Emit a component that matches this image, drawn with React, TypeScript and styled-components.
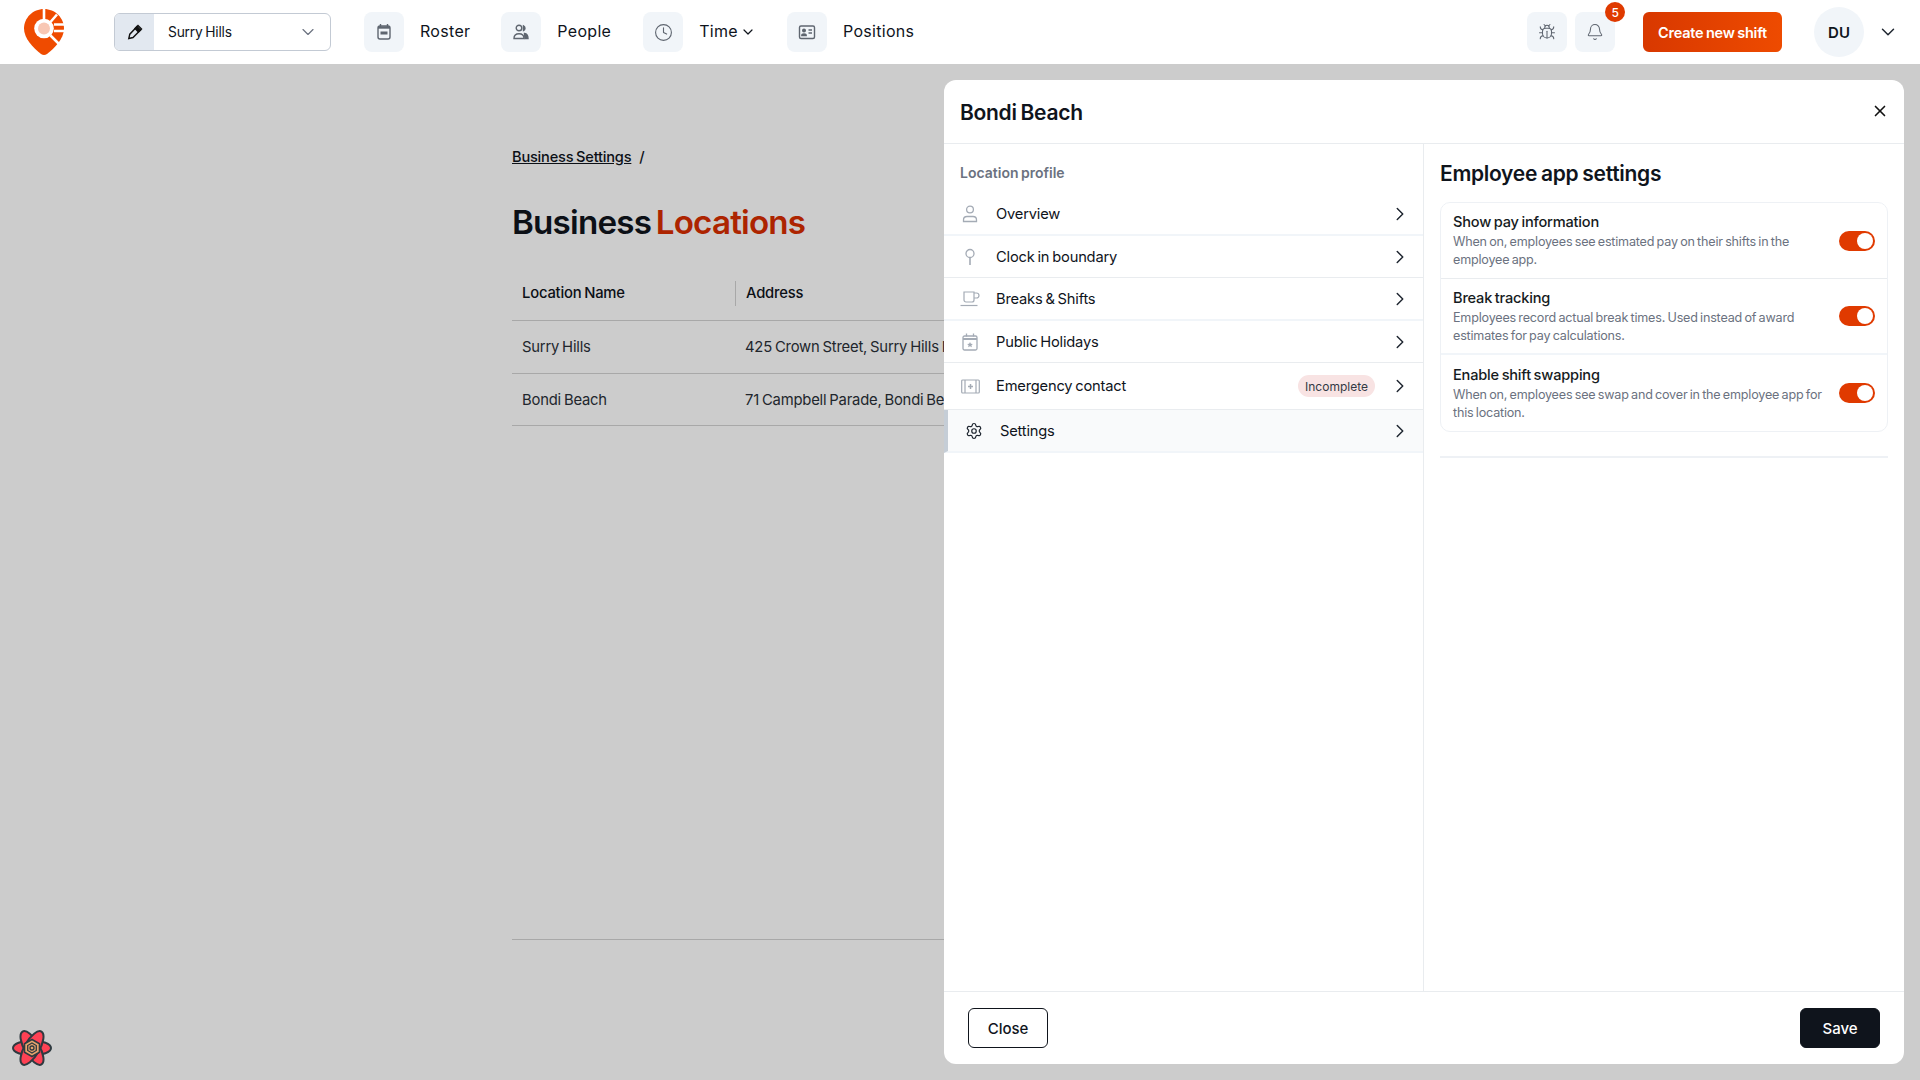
import React from "react";
import styled, { createGlobalStyle } from "styled-components";
import { ChevronDown, ChevronRight, Clock, Bug, Bell, X, Settings as Gear } from "lucide-react";

const Global = createGlobalStyle`
  html, body { margin: 0; padding: 0; height: 100%; background: #fff; overflow: hidden; }
  body { font-family: "Inter", "Liberation Sans", sans-serif; color: #0f141c; letter-spacing: -0.2px; word-spacing: -1px; }
  #root { height: 100%; }
  * { box-sizing: border-box; }
`;

const Shell = styled.div`
  height: 1080px;
  display: flex;
  flex-direction: column;
  position: relative;
`;
const Header = styled.header`
  height: 64px;
  flex: none;
  display: flex;
  align-items: center;
  padding: 0 21px 0 24px;
  background: #fff;
`;
const Logo = styled.svg`
  width: 40px;
  height: 46px;
  flex: none;
  margin-right: 50px;
`;
const LocationSelect = styled.div`
  width: 217px;
  height: 38px;
  display: flex;
  align-items: center;
  border: 1px solid #c3cad4;
  border-radius: 6px;
  overflow: hidden;
  margin-right: 33px;
  font-size: 13.8px;
`;
const SelectIcon = styled.div`
  width: 39px;
  height: 100%;
  background: #e2e8f0;
  display: flex;
  align-items: center;
  justify-content: center;
`;
const SelectLabel = styled.span`
  flex: 1;
  padding-left: 14px;
`;
const SelectCaret = styled.span`
  display: flex;
  padding-right: 12px;
  color: #6b7280;
`;
const Nav = styled.nav`
  display: flex;
  align-items: center;
  flex: 1;
`;
const NavItem = styled.div<{ $gap: number }>`
  display: flex;
  align-items: center;
  font-size: 16px;
  letter-spacing: 0.3px;
  margin-right: ${(p) => p.$gap}px;
`;
const NavLabel = styled.span`
  margin-left: 16px;
  position: relative;
  top: -1px;
`;
const NavCaret = styled.span`
  display: flex;
  margin-left: 2px;
`;
const IconTile = styled.div`
  width: 40px;
  height: 40px;
  border-radius: 8px;
  background: #f1f5f9;
  color: #5f6670;
  display: flex;
  align-items: center;
  justify-content: center;
  position: relative;
  flex: none;
`;
const Badge = styled.span`
  position: absolute;
  right: -10px;
  top: -10px;
  width: 20px;
  height: 20px;
  border-radius: 50%;
  background: #df3a00;
  color: #fff;
  font-size: 12px;
  font-weight: 500;
  display: flex;
  align-items: center;
  justify-content: center;
`;
const HeaderRight = styled.div`
  display: flex;
  align-items: center;
  gap: 8px;
`;
const CreateButton = styled.button`
  height: 40px;
  width: 139px;
  margin-left: 28px;
  margin-right: 32px;
  border: none;
  border-radius: 6px;
  background: linear-gradient(90deg, #d83800, #ee4b00);
  color: #fff;
  font: 600 14.5px "Inter", sans-serif;
  letter-spacing: -0.2px;
  word-spacing: -1px;
  padding: 0;
`;
const Avatar = styled.div`
  width: 50px;
  height: 50px;
  border-radius: 50%;
  background: #f1f5f9;
  display: flex;
  align-items: center;
  justify-content: center;
  font-size: 15px;
  font-weight: 600;
  letter-spacing: 0;
`;
const AvatarCaret = styled.span`
  display: flex;
  margin-left: 13px;
  color: #1f2630;
`;

const Main = styled.main`
  flex: 1;
  position: relative;
  background: #fff;
`;
const Content = styled.div`
  width: 896px;
  margin: 0 auto;
  padding-top: 83px;
`;
const Breadcrumb = styled.div`
  display: flex;
  align-items: center;
  gap: 8px;
  font-size: 14.6px;
  font-weight: 500;
  height: 20px;
`;
const Crumb = styled.a`
  text-decoration: underline;
  color: #0f141c;
`;
const PageTitle = styled.h1`
  margin: 33px 0 0;
  font-size: 33.2px;
  line-height: 44px;
  font-weight: 600;
  letter-spacing: -0.8px;
  word-spacing: -3px;
  color: #0f141c;
`;
const Accent = styled.span`
  color: #d92e00;
`;
const TableBox = styled.div`
  margin-top: 23px;
  height: 673px;
  border-bottom: 1px solid #d2d2d2;
`;
const Row = styled.div<{ $h: number }>`
  display: grid;
  grid-template-columns: 223px 1fr;
  align-items: center;
  height: ${(p) => p.$h}px;
  border-bottom: 1px solid #d2d2d2;
  font-size: 14.8px;
`;
const HeadCell = styled.div<{ $divider?: boolean }>`
  font-weight: 500;
  padding-left: 10px;
  border-left: ${(p) => (p.$divider ? "1px solid #d2d2d2" : "none")};
  height: 25px;
  line-height: 25px;
`;
const Cell = styled.div`
  padding-left: 10px;
  color: #2a3038;
  white-space: nowrap;
`;

const Scrim = styled.div`
  position: absolute;
  inset: 0;
  background: rgba(0, 0, 0, 0.2);
`;
const Modal = styled.section`
  position: absolute;
  left: 944px;
  top: 16px;
  width: 960px;
  height: 984px;
  background: #fff;
  border-radius: 12px;
  display: flex;
  flex-direction: column;
  overflow: hidden;
`;
const ModalHead = styled.div`
  height: 64px;
  flex: none;
  border-bottom: 1px solid #e9ecef;
  display: flex;
  align-items: center;
  justify-content: space-between;
  padding: 1px 15px 0 16px;
`;
const ModalTitle = styled.h2`
  margin: 0;
  font-size: 21px;
  font-weight: 600;
  letter-spacing: -0.3px;
`;
const CloseIcon = styled.span`
  display: flex;
  margin-top: -3px;
  color: #111;
`;
const ModalBody = styled.div`
  flex: 1;
  display: grid;
  grid-template-columns: 480px 1fr;
  min-height: 0;
`;
const LeftCol = styled.div`
  border-right: 1px solid #e9ecef;
  padding-top: 16px;
`;
const SectionLabel = styled.div`
  font-size: 14px;
  font-weight: 600;
  letter-spacing: 0;
  color: #6b7280;
  padding-left: 16px;
  height: 33px;
  line-height: 26px;
`;
const MenuRow = styled.div<{ $h: number; $active?: boolean; $thick?: boolean }>`
  height: ${(p) => p.$h}px;
  display: flex;
  align-items: center;
  font-size: 14.7px;
  padding-left: 16px;
  padding-right: 12px;
  border-bottom: ${(p) => (p.$thick || p.$active ? "2px solid #f1f5f9" : "1px solid #e9ecef")};
  border-left: ${(p) => (p.$active ? "4px solid #c5cdd6" : "none")};
  background: ${(p) => (p.$active ? "#f9fafb" : "transparent")};
`;
const MenuIcon = styled.span<{ $dark?: boolean }>`
  width: 20px;
  display: flex;
  justify-content: center;
  margin-right: 16px;
  color: ${(p) => (p.$dark ? "#1f2630" : "#a4abb5")};
`;
const MenuLabel = styled.span`
  flex: 1;
`;
const Pill = styled.span`
  width: 77px;
  height: 22px;
  border-radius: 11px;
  background: #f8e3e3;
  font-size: 12px;
  color: #333a44;
  letter-spacing: 0;
  display: flex;
  align-items: center;
  justify-content: center;
  margin-right: 14px;
`;
const Chevron = styled.span`
  display: flex;
  color: #1f2630;
`;
const RightCol = styled.div`
  padding: 16px 16px 0;
`;
const PanelTitle = styled.h3`
  margin: 0;
  font-size: 21px;
  line-height: 28px;
  font-weight: 600;
  letter-spacing: -0.3px;
`;
const Card = styled.div`
  margin-top: 14px;
  border: 1px solid #eef1f5;
  border-radius: 10px;
`;
const SettingRow = styled.div<{ $thick?: boolean; $last?: boolean }>`
  height: 76px;
  display: flex;
  align-items: center;
  padding: 0 12px;
  border-bottom: ${(p) => (p.$last ? "none" : p.$thick ? "2px solid #f1f5f9" : "1px solid #e9ecef")};
`;
const SettingText = styled.div`
  flex: 1;
  min-width: 0;
  padding-right: 14px;
`;
const SettingTitle = styled.div`
  font-size: 14.6px;
  font-weight: 500;
  line-height: 20px;
  color: #161b22;
`;
const SettingDesc = styled.div`
  font-size: 12.6px;
  line-height: 18px;
  color: #6b7280;
  margin-top: 1px;
`;
const Toggle = styled.span`
  width: 36px;
  height: 20px;
  border-radius: 10px;
  background: #e03a00;
  flex: none;
  display: flex;
  align-items: center;
  justify-content: flex-end;
  padding-right: 2px;
  &::after {
    content: "";
    width: 16px;
    height: 16px;
    border-radius: 50%;
    background: #fff;
  }
`;
const PanelRule = styled.div`
  margin-top: 24px;
  height: 2px;
  background: #eef1f5;
`;
const ModalFoot = styled.div`
  height: 73px;
  flex: none;
  border-top: 1px solid #e9ecef;
  display: flex;
  align-items: flex-start;
  justify-content: space-between;
  padding: 16px 24px 0;
`;
const FootButton = styled.button<{ $primary?: boolean }>`
  width: 80px;
  height: 40px;
  border-radius: 6px;
  border: 1px solid #0f141c;
  background: ${(p) => (p.$primary ? "#0f141c" : "#fff")};
  color: ${(p) => (p.$primary ? "#fff" : "#0f141c")};
  font: 500 15px "Inter", sans-serif;
  padding: 0;
`;
const DevTools = styled.svg`
  position: absolute;
  left: 12px;
  bottom: 14px;
  width: 40px;
  height: 36px;
`;

const NavIcon: React.FC<{ d: React.ReactNode }> = ({ d }) => (
  <svg width="20" height="20" viewBox="0 0 20 20" fill="none" stroke="currentColor" strokeWidth="1.4">
    {d}
  </svg>
);

const menu = [
  { label: "Overview", h: 43, thick: true, icon: (
    <svg width="18" height="18" viewBox="0 0 18 18" fill="none" stroke="currentColor" strokeWidth="1.3">
      <circle cx="9" cy="4.5" r="3.4" />
      <path d="M2.5 16.5v-1.5c0-2 1.6-3.5 3.5-3.500h6c2 0 3.500 1.600 3.500 3.500v1.500z" />
    </svg>) },
  { label: "Clock in boundary", h: 42, icon: (
    <svg width="18" height="18" viewBox="0 0 18 18" fill="none" stroke="currentColor" strokeWidth="1.3">
      <circle cx="9" cy="5.5" r="4" />
      <path d="M9 9.500v7.500" strokeWidth="1.600" />
    </svg>) },
  { label: "Breaks & Shifts", h: 43, thick: true, icon: (
    <svg width="20" height="16" viewBox="0 0 20 16" fill="none" stroke="currentColor" strokeWidth="1.2">
      <path d="M4 1h10v8a2 2 0 0 1-2 2H6a2 2 0 0 1-2-2z" />
      <path d="M14 2h2.500a2 2 0 0 1 0 5H14" />
      <path d="M0.500 14.500h17" />
    </svg>) },
  { label: "Public Holidays", h: 42, icon: (
    <svg width="16" height="18" viewBox="0 0 16 18" fill="none" stroke="currentColor" strokeWidth="1.3">
      <rect x="1" y="3" width="14" height="14" rx="1.500" />
      <path d="M1 6h14" strokeWidth="2" />
      <path d="M4.500 0.500v3M11.500 0.500v3" />
      <path d="M8 9l.9 1.800 2 .2-1.500 1.300.5 2L8 13.200 6.100 14.300l.5-2L5.100 11l2-.2z" fill="currentColor" stroke="none" />
    </svg>) },
  { label: "Emergency contact", h: 47, pill: true, icon: (
    <svg width="19" height="15" viewBox="0 0 19 15" fill="none" stroke="currentColor" strokeWidth="1.2">
      <rect x="0.700" y="1" width="17.600" height="13" rx="1" />
      <path d="M4 1v13M15 1v13" />
      <path d="M9.500 5v5M7 7.500h5" strokeWidth="1.500" />
    </svg>) },
  { label: "Settings", h: 43, active: true, icon: <Gear size={18} strokeWidth={1.6} /> },
];

const settings = [
  { title: "Show pay information", desc: "When on, employees see estimated pay on their shifts in the employee app." },
  { title: "Break tracking", desc: "Employees record actual break times. Used instead of award estimates for pay calculations.", thick: true },
  { title: "Enable shift swapping", desc: "When on, employees see swap and cover in the employee app for this location.", last: true },
];

export default function App() {
  return (
    <Shell>
      <Global />
      <Header>
        <Logo viewBox="0 0 40 46">
          <path d="M20 0C9 0 0 8.800 0 19.500 0 29 9 39 17 45c2 1.300 4 1.300 6 0 7-5.500 17-15 17-25.500C40 8.800 31 0 20 0z" fill="#ef4b00" />
          <circle cx="20" cy="19.500" r="9.800" fill="#fff" />
          <circle cx="20" cy="19.500" r="6" fill="#f8c7b4" />
          <path d="M20 10V0M26.500 13L33 5.500M30 15.500H40M30 22H40M26.500 26.500L35 35" stroke="#fff" strokeWidth="2.600" />
        </Logo>
        <LocationSelect>
          <SelectIcon>
            <svg width="16" height="16" viewBox="0 0 16 16" fill="none" stroke="#111" strokeWidth="1.400">
              <path d="M11 1.500l3.500 3.500L6 13.500 1.800 14.500l1-4.300z" />
              <path d="M10 2.500l3.500 3.500-2 2L8 4.500z" fill="#111" />
            </svg>
          </SelectIcon>
          <SelectLabel>Surry Hills</SelectLabel>
          <SelectCaret><ChevronDown size={20} strokeWidth={1.4} /></SelectCaret>
        </LocationSelect>
        <Nav>
          <NavItem $gap={31}>
            <IconTile>
              <NavIcon d={<>
                <rect x="4" y="4" width="12" height="13" rx="2" />
                <path d="M6.500 2v3M13.500 2v3" />
                <path d="M4 5.500h12" strokeWidth="2.400" />
                <rect x="6.500" y="9.500" width="7" height="3" fill="currentColor" stroke="none" />
              </>} />
            </IconTile>
            <NavLabel>Roster</NavLabel>
          </NavItem>
          <NavItem $gap={32}>
            <IconTile>
              <NavIcon d={<>
                <circle cx="8" cy="6" r="2.800" />
                <path d="M3 16.500c0-3 2-4.800 5-4.800s5 1.800 5 4.800z" />
                <path d="M12.500 3.800a2.600 2.600 0 0 1 0 4.700z" fill="currentColor" />
                <path d="M13.500 11.500c2 .3 3.500 2 3.500 5h-3z" fill="currentColor" />
              </>} />
            </IconTile>
            <NavLabel>People</NavLabel>
          </NavItem>
          <NavItem $gap={31}>
            <IconTile><Clock size={19} strokeWidth={1.4} /></IconTile>
            <NavLabel>Time</NavLabel>
            <NavCaret><ChevronDown size={16} strokeWidth={1.8} /></NavCaret>
          </NavItem>
          <NavItem $gap={0}>
            <IconTile>
              <NavIcon d={<>
                <rect x="2.500" y="4" width="15" height="12.500" rx="1.500" />
                <circle cx="7" cy="8.500" r="1.300" fill="currentColor" />
                <path d="M4.800 13.500c0-2 4.400-2 4.400 0z" fill="currentColor" />
                <path d="M11.500 8h3.500M11.500 11h3.500" />
              </>} />
            </IconTile>
            <NavLabel>Positions</NavLabel>
          </NavItem>
        </Nav>
        <HeaderRight>
          <IconTile><Bug size={18} strokeWidth={1.4} /></IconTile>
          <IconTile>
            <Bell size={18} strokeWidth={1.4} />
            <Badge>5</Badge>
          </IconTile>
        </HeaderRight>
        <CreateButton>Create new shift</CreateButton>
        <Avatar>DU</Avatar>
        <AvatarCaret><ChevronDown size={22} strokeWidth={1.6} /></AvatarCaret>
      </Header>
      <Main>
        <Content>
          <Breadcrumb>
            <Crumb>Business Settings</Crumb>
            <span>/</span>
          </Breadcrumb>
          <PageTitle>Business <Accent>Locations</Accent></PageTitle>
          <TableBox>
            <Row $h={54}>
              <HeadCell>Location Name</HeadCell>
              <HeadCell $divider>Address</HeadCell>
            </Row>
            <Row $h={53}>
              <Cell>Surry Hills</Cell>
              <Cell>425 Crown Street, Surry Hills NSW</Cell>
            </Row>
            <Row $h={52}>
              <Cell>Bondi Beach</Cell>
              <Cell>71 Campbell Parade, Bondi Beach</Cell>
            </Row>
          </TableBox>
        </Content>
        <Scrim />
        <Modal>
          <ModalHead>
            <ModalTitle>Bondi Beach</ModalTitle>
            <CloseIcon><X size={18} strokeWidth={2.2} /></CloseIcon>
          </ModalHead>
          <ModalBody>
            <LeftCol>
              <SectionLabel>Location profile</SectionLabel>
              {menu.map((m) => (
                <MenuRow key={m.label} $h={m.h} $active={m.active} $thick={m.thick}>
                  <MenuIcon $dark={m.active}>{m.icon}</MenuIcon>
                  <MenuLabel>{m.label}</MenuLabel>
                  {m.pill && <Pill>Incomplete</Pill>}
                  <Chevron><ChevronRight size={22} strokeWidth={1.6} /></Chevron>
                </MenuRow>
              ))}
            </LeftCol>
            <RightCol>
              <PanelTitle>Employee app settings</PanelTitle>
              <Card>
                {settings.map((s) => (
                  <SettingRow key={s.title} $thick={s.thick} $last={s.last}>
                    <SettingText>
                      <SettingTitle>{s.title}</SettingTitle>
                      <SettingDesc>{s.desc}</SettingDesc>
                    </SettingText>
                    <Toggle />
                  </SettingRow>
                ))}
              </Card>
              <PanelRule />
            </RightCol>
          </ModalBody>
          <ModalFoot>
            <FootButton>Close</FootButton>
            <FootButton $primary>Save</FootButton>
          </ModalFoot>
        </Modal>
        <DevTools viewBox="0 0 40 36">
          <g fill="#ff4154" stroke="#2f3a40" strokeWidth="2">
            <ellipse cx="20" cy="18" rx="19" ry="7.500" />
            <ellipse cx="20" cy="18" rx="19" ry="7.500" transform="rotate(60 20 18)" />
            <ellipse cx="20" cy="18" rx="19" ry="7.500" transform="rotate(-60 20 18)" />
          </g>
          <path d="M20 9.500l7.500 4.200v8.600L20 26.500l-7.500-4.200v-8.600z" fill="#e8a46c" stroke="#2f3a40" strokeWidth="1.600" />
          <path d="M20 13l4.300 2.500v5L20 23l-4.300-2.500v-5z" fill="none" stroke="#2f3a40" strokeWidth="1.300" />
          <circle cx="20" cy="18" r="2" fill="none" stroke="#2f3a40" strokeWidth="1.300" />
        </DevTools>
      </Main>
    </Shell>
  );
}
